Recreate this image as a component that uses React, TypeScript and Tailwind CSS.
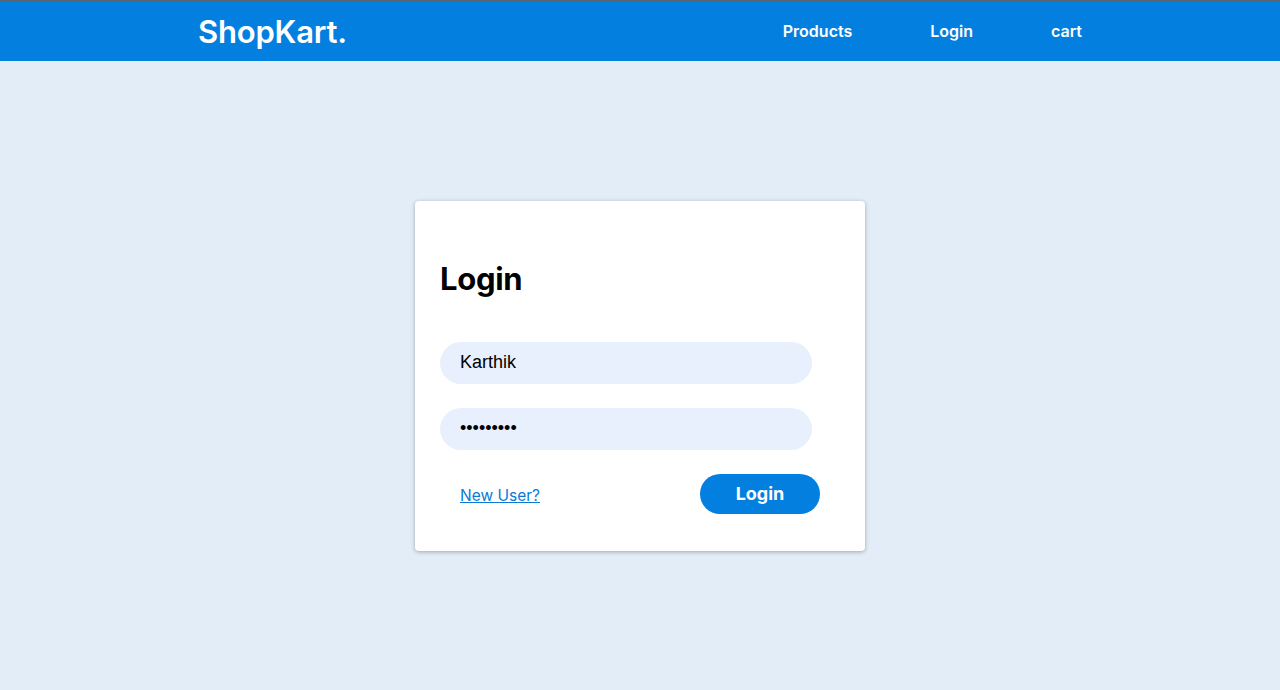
import React from "react";

export default function App() {
    return (
        <div className="min-h-screen flex flex-col bg-[#e3edf7] font-['Inter',sans-serif]">
            <header className="h-[61px] bg-[#037fe0] border-t-2 border-[#5b6570]">
                <div className="w-[884px] mx-auto h-full flex items-center justify-between">
                    <span className="text-white text-[31px] font-semibold tracking-[-0.2px] pt-[2px]">ShopKart.</span>
                    <nav className="flex items-center gap-[78px] text-white text-base font-semibold pb-[2px]">
                        <a href="#">Products</a>
                        <a href="#">Login</a>
                        <a href="#">cart</a>
                    </nav>
                </div>
            </header>

            <main className="flex-1 flex items-center justify-center">
                <div className="w-[450px] h-[350px] bg-white rounded-[4px] shadow-[0_1px_4px_rgba(0,0,0,0.3)] px-[25px] pt-[58px]">
                    <h1 className="text-[31px] font-bold leading-[39px] tracking-[-0.3px] text-black">Login</h1>
                    <form className="mt-[44px] flex flex-col gap-6">
                        <input
                            type="text"
                            defaultValue="Karthik"
                            readOnly
                            className="w-[372px] h-[42px] rounded-full bg-[#e8f0fe] px-5 text-[18px] text-black font-['Liberation_Sans',sans-serif] outline-none"
                        />
                        <input
                            type="password"
                            defaultValue="karthik12"
                            readOnly
                            className="w-[372px] h-[42px] rounded-full bg-[#e8f0fe] px-5 text-[18px] text-black font-['Liberation_Sans',sans-serif] outline-none"
                        />
                        <div className="flex items-center justify-between px-5">
                            <a href="#" className="text-[#0a7ad6] underline text-[15.5px] pt-[4px]">New User?</a>
                            <button type="button" className="w-[120px] h-10 rounded-full bg-[#037fe0] text-white text-lg font-bold">
                                Login
                            </button>
                        </div>
                    </form>
                </div>
            </main>
        </div>
    );
}
